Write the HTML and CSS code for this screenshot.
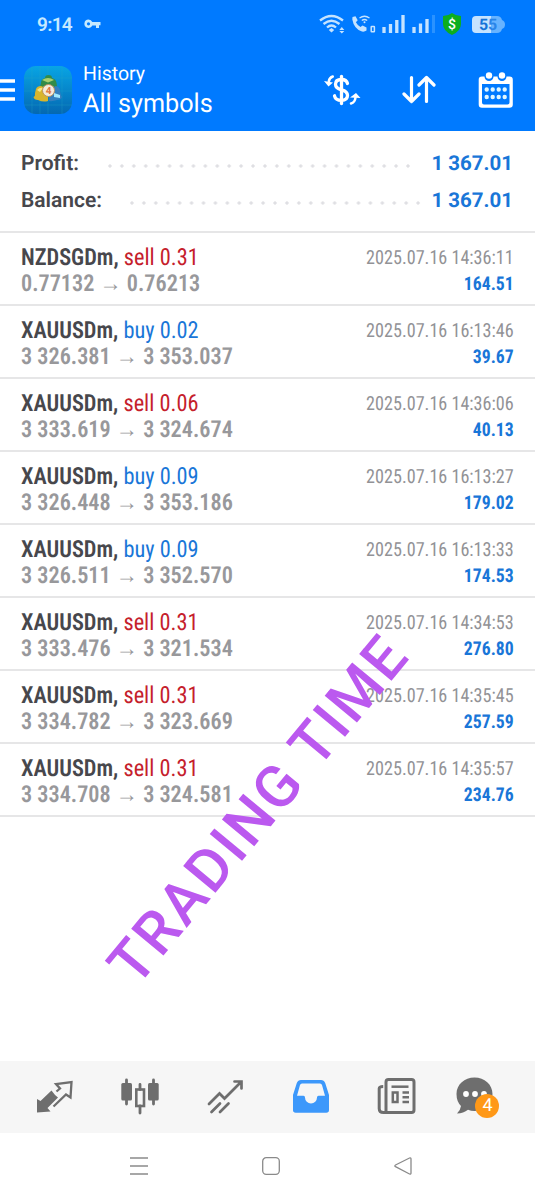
FILE: index.html
```html
<!DOCTYPE html>
<html lang="en">
<head>
    <meta charset="UTF-8">
    <meta name="viewport" content="width=device-width, initial-scale=1.0">
    <title>History</title>
    <link rel="stylesheet" href="styles.css">
</head>
<body>
    <header class="header">
        <div class="status-bar">
            <span class="clock">9:14</span>
            <svg class="key" width="17" height="10" viewBox="0 0 17 10">
                <path d="M4.500 0.500a4.200 4.200 0 1 0 3.900 6H12V9h3V6.300h1.500V3H8.300A4.200 4.200 0 0 0 4.500.5zm0 2.700a1.600 1.600 0 1 1 0 3.200 1.600 1.600 0 0 1 0-3.200z" fill="#c5e9ff" fill-rule="evenodd"/>
            </svg>
            <svg class="signals" width="118" height="20" viewBox="318 14 118 20" fill="none" stroke="#c5e3ff">
                <path d="M320 20.500q11.500-9 23 0M323.500 24q8-6.500 16 0M327 27.500q4.500-4 9 0" stroke-width="2.300"/>
                <path d="M328.800 30l2.700-2 2.700 2-2.700 2.500z" fill="#c5e3ff" stroke="none"/>
                <path d="M339.300 30l2.500-3 2.500 3zM339.300 31h5l-2.500 2.500z" fill="#c5e3ff" stroke="none"/>
                <path d="M352.500 17l3-.8 2.200 4-1.800 2q1.500 3 4.600 4.700l2-1.500 4 2.200v3q-2 1.500-4.500 1Q354 29 352.300 19.500z" fill="#c5e3ff" stroke="none"/>
                <path d="M359.500 18q5-3.500 10 0M361.800 20.500q2.700-2 5.400 0" stroke-width="1.300"/>
                <circle cx="364.500" cy="22.300" r="1" fill="#c5e3ff" stroke="none"/>
                <rect x="371.200" y="26.500" width="3.200" height="5.200" rx=".5" stroke-width="1.500"/>
                <path d="M384 27v6M390.500 24v9M396.800 20v13M403 15v18M414 27v6M420.500 23.500v9.500M427 19v14" stroke-width="3.300"/>
                <path d="M433.500 15v18" stroke="#2a92ff" stroke-width="3"/>
            </svg>
            <svg class="shield" width="20" height="22" viewBox="0 0 20 22">
                <path d="M10 0Q14 3 19 3v8q0 7-9 11Q1 18 1 11V3q5 0 9-3z" fill="#0cae20"/>
                <text x="10" y="15.500" text-anchor="middle" class="shield-text">$</text>
            </svg>
            <svg class="battery" width="33" height="17" viewBox="0 0 33 17">
                <path d="M18 0h7q4 0 5 4 3 1 3 4.500T30 13q-1 4-5 4h-7z" fill="#67b3ff"/>
                <path d="M4 0h15v17H4q-4 0-4-4V4q0-4 4-4z" fill="#c5e3ff"/>
                <text x="7" y="14" class="battery-text">5</text>
                <text x="16" y="14" class="battery-text battery-rest">5</text>
            </svg>
        </div>
        <div class="toolbar">
            <svg class="menu" width="15" height="22" viewBox="0 0 15 22">
                <path d="M0 2h15M0 11h15M0 20h15" stroke="#fff" stroke-width="3.300"/>
            </svg>
            <svg class="logo" width="48" height="48" viewBox="0 0 48 48">
                <defs>
                    <linearGradient id="sky" x1="0" y1="0" x2="0" y2="1">
                        <stop offset="0" stop-color="#08a5e4"/>
                        <stop offset="1" stop-color="#0468b2"/>
                    </linearGradient>
                </defs>
                <rect width="48" height="48" rx="12" fill="url(#sky)"/>
                <path d="M8 0v48M16 0v48M24 0v48M38 0v48M0 12h48M0 25h48M0 39h48" stroke="#29abc9" stroke-width=".7" opacity=".4"/>
                <path d="M17 17q0-4 4-5 0-3 3.500-3t3.500 3q4 1 4.500 5l1 6-9 3-9-3z" fill="#328b48"/>
                <path d="M18 14q6-4 12 0l-6 2.500z" fill="#a8cf70"/>
                <path d="M12 23q1-3 5-3l7 3v12q-5 1.500-10-1-4 0-4.500-3 2-1 1.500-4z" fill="#d8b52c"/>
                <path d="M13 24q3-3 6-2l-3 4z" fill="#f5e685"/>
                <path d="M25 23l7-3q4 1 4 5 .5 4 2 6-1 3-5 3-4 1.500-8 1z" fill="#347fc0"/>
                <path d="M30 27l6 2v3l-6-1z" fill="#a2e7ff"/>
                <circle cx="24.500" cy="24.500" r="6" fill="#f4eadb" stroke="#bb9360"/>
                <text x="24.500" y="28" text-anchor="middle" class="logo-text">4</text>
            </svg>
            <div class="heading">
                <span class="subtitle">History</span>
                <h1>All symbols</h1>
            </div>
            <div class="actions">
                <svg width="38" height="34" viewBox="323 72 38 34" fill="none" stroke="#fff" stroke-width="3.300" stroke-linecap="round">
                    <path d="M341.500 75.500v27"/>
                    <path d="M347.500 82.500q-1-4-6-4-6 0-6 4.800 0 4 6 5.500t6 5.500q0 5-6 5-6 0-7-4.500"/>
                    <path d="M332.800 75.500q-3.500 1-4 5M351 102.500q4-1 4.500-6" stroke-width="2.500"/>
                    <path d="M324 80l9 1.500-4.500 4zM350 96.500l6-4.500 4.500 5z" fill="#fff" stroke="none"/>
                </svg>
                <svg width="35" height="30" viewBox="402 75 35 30" fill="none" stroke="#fff" stroke-width="3.200" stroke-linecap="round" stroke-linejoin="round">
                    <path d="M411.500 77.500v24M404 94l7.500 7.500 7.500-7.500M426.500 101.500v-24M419 85l7.500-7.500 7.500 7.500"/>
                </svg>
                <svg width="36" height="36" viewBox="478 71 36 36">
                    <path d="M482 75.500h2.500a4.500 4.500 0 0 0 9 0h4a4.500 4.500 0 0 0 9 0h3q3.300 0 3.300 3.300v24.700q0 3.300-3.300 3.300H482q-3.300 0-3.300-3.300V78.800q0-3.300 3.300-3.300zM482 83v18.500q0 2 2 2h23.500q2 0 2-2V83z" fill="#fff" fill-rule="evenodd"/>
                    <circle cx="489" cy="74.500" r="3.200" fill="#fff"/>
                    <circle cx="502" cy="74.500" r="3.200" fill="#fff"/>
                    <path d="M486.700 88.500h20M486.700 96h20" stroke="#e0f6ff" stroke-width="4.400" stroke-linecap="round" stroke-dasharray="0 6"/>
                </svg>
            </div>
        </div>
    </header>

    <section class="summary">
        <div class="summary-row">
            <span class="label">Profit:</span>
            <i class="dots dots-profit"></i>
            <b>1 367.01</b>
        </div>
        <div class="summary-row">
            <span class="label">Balance:</span>
            <i class="dots dots-balance"></i>
            <b>1 367.01</b>
        </div>
    </section>

    <main class="deals">
        <div class="deal">
            <div class="deal-info">
                <p class="symbol">NZDSGDm, <span class="sell">sell 0.31</span></p>
                <p class="price">0.77132 <span class="arrow">→</span> 0.76213</p>
            </div>
            <div class="deal-result">
                <p class="date">2025.07.16 14:36:11</p>
                <p class="amount">164.51</p>
            </div>
        </div>
        <div class="deal">
            <div class="deal-info">
                <p class="symbol">XAUUSDm, <span class="buy">buy 0.02</span></p>
                <p class="price">3 326.381 <span class="arrow">→</span> 3 353.037</p>
            </div>
            <div class="deal-result">
                <p class="date">2025.07.16 16:13:46</p>
                <p class="amount">39.67</p>
            </div>
        </div>
        <div class="deal">
            <div class="deal-info">
                <p class="symbol">XAUUSDm, <span class="sell">sell 0.06</span></p>
                <p class="price">3 333.619 <span class="arrow">→</span> 3 324.674</p>
            </div>
            <div class="deal-result">
                <p class="date">2025.07.16 14:36:06</p>
                <p class="amount">40.13</p>
            </div>
        </div>
        <div class="deal">
            <div class="deal-info">
                <p class="symbol">XAUUSDm, <span class="buy">buy 0.09</span></p>
                <p class="price">3 326.448 <span class="arrow">→</span> 3 353.186</p>
            </div>
            <div class="deal-result">
                <p class="date">2025.07.16 16:13:27</p>
                <p class="amount">179.02</p>
            </div>
        </div>
        <div class="deal">
            <div class="deal-info">
                <p class="symbol">XAUUSDm, <span class="buy">buy 0.09</span></p>
                <p class="price">3 326.511 <span class="arrow">→</span> 3 352.570</p>
            </div>
            <div class="deal-result">
                <p class="date">2025.07.16 16:13:33</p>
                <p class="amount">174.53</p>
            </div>
        </div>
        <div class="deal">
            <div class="deal-info">
                <p class="symbol">XAUUSDm, <span class="sell">sell 0.31</span></p>
                <p class="price">3 333.476 <span class="arrow">→</span> 3 321.534</p>
            </div>
            <div class="deal-result">
                <p class="date">2025.07.16 14:34:53</p>
                <p class="amount">276.80</p>
            </div>
        </div>
        <div class="deal">
            <div class="deal-info">
                <p class="symbol">XAUUSDm, <span class="sell">sell 0.31</span></p>
                <p class="price">3 334.782 <span class="arrow">→</span> 3 323.669</p>
            </div>
            <div class="deal-result">
                <p class="date">2025.07.16 14:35:45</p>
                <p class="amount">257.59</p>
            </div>
        </div>
        <div class="deal">
            <div class="deal-info">
                <p class="symbol">XAUUSDm, <span class="sell">sell 0.31</span></p>
                <p class="price">3 334.708 <span class="arrow">→</span> 3 324.581</p>
            </div>
            <div class="deal-result">
                <p class="date">2025.07.16 14:35:57</p>
                <p class="amount">234.76</p>
            </div>
        </div>
    </main>

    <svg class="watermark" width="535" height="400" viewBox="0 600 535 400">
        <text transform="translate(257 810) rotate(-50.3)" x="0" y="21" text-anchor="middle" textLength="429">TRADING TIME</text>
    </svg>

    <nav class="tabs">
        <svg width="40" height="40" viewBox="35 1077 40 40">
            <path d="M37 1099l3.500 2 11-10.500q3 4.500 6.500 7l-10.500 10.500 3 3.500-13.500.9z" fill="#6e6e6e"/>
            <path d="M53.500 1106.500l12.500-12 4.500 3 1-15.500-15.500 2 4 4.500-3.500 3" fill="none" stroke="#6e6e6e" stroke-width="2.300"/>
        </svg>
        <svg width="40" height="40" viewBox="120 1077 40 40">
            <path d="M126.500 1080v24M153.500 1080v24M140 1084.500v5M140 1106v7" stroke="#6e6e6e" stroke-width="2.800" stroke-linecap="round"/>
            <rect x="121.300" y="1083" width="10.700" height="17.500" rx="1.500" fill="#6e6e6e"/>
            <rect x="148" y="1083" width="10.700" height="17.500" rx="1.500" fill="#6e6e6e"/>
            <rect x="136.300" y="1089.500" width="7.700" height="16.500" fill="none" stroke="#6e6e6e" stroke-width="2.600"/>
        </svg>
        <svg width="40" height="40" viewBox="206 1077 40 40" fill="none" stroke="#6e6e6e" stroke-width="2.700" stroke-linecap="round">
            <path d="M209 1104l10.500-10.500 5 5 16.500-16.500M234.500 1081.500h7v7M211.500 1112l8.500-8.500M220 1112l8.500-8.500"/>
        </svg>
        <svg width="40" height="40" viewBox="291 1077 40 40">
            <path d="M301 1080h20q3 0 4.200 3l3.800 12v15q0 2.700-2.700 2.700h-30.600q-2.700 0-2.700-2.700v-15l3.800-12q1.200-3 4.200-3zM302 1083.500q-1.500 0-2 1.500l-3 10.800h6.500q1.500 0 1.500 1.800a6 6 0 0 0 12 0q0-1.800 1.500-1.800h6.500l-3-10.800q-.5-1.500-2-1.500z" fill="#3c98fb" fill-rule="evenodd"/>
        </svg>
        <svg width="40" height="40" viewBox="376 1077 40 40" fill="none" stroke="#6e6e6e" stroke-width="3">
            <path d="M386 1113V1082q0-2.500 2.500-2.500h23q2.500 0 2.500 2.500v28q0 2.500-2.500 2.500h-28q-4.300 0-4.300-4v-20q0-2 4-2"/>
            <path d="M391.500 1086.700h17" stroke-width="2.500"/>
            <rect x="392.800" y="1092.500" width="4.700" height="9.500" stroke-width="2.500"/>
            <path d="M402.500 1092.500h6.500M402.500 1097.300h6.500M402.500 1102h6.500" stroke-width="2.500"/>
        </svg>
        <div class="chat">
            <svg width="44" height="42" viewBox="456 1077 44 42">
                <path d="M474.500 1078.500c10 0 18 7 18 16.500s-8 17-18 17q-3.500 0-6.500-1.200-4.500 3.700-11 3.700 3.500-3.500 4-7.500-4.500-4.500-4.500-12c0-9.500 8-16.500 18-16.500z" fill="#6e6e6e"/>
                <circle cx="466" cy="1095" r="2.900" fill="#fff"/>
                <circle cx="475" cy="1095" r="2.900" fill="#fff"/>
                <circle cx="484" cy="1095" r="2.900" fill="#fff"/>
            </svg>
            <span class="badge">4</span>
        </div>
    </nav>

    <footer class="system-nav">
        <svg width="18" height="20" viewBox="0 0 18 20" stroke="#8a8a8a" stroke-width="1.300">
            <path d="M0 2h18M0 10h18M0 18h18"/>
        </svg>
        <svg width="18" height="20" viewBox="0 0 18 20" fill="none" stroke="#8a8a8a" stroke-width="1.300">
            <rect x=".7" y="1.700" width="16.600" height="16.600" rx="3.500"/>
        </svg>
        <svg width="18" height="20" viewBox="0 0 18 20" fill="none" stroke="#8a8a8a" stroke-width="1.300">
            <path d="M1.500 9l14-7q1.500-.5 1.500 1v14q0 1.500-1.500 1l-14-7.300q-1.300-.8 0-1.700z"/>
        </svg>
    </footer>
</body>
</html>
```
FILE: styles.css
```css
* {
    box-sizing: border-box;
}

body {
    position: relative;
    display: flex;
    flex-direction: column;
    width: 535px;
    height: 1199px;
    margin: 0;
    background: #fff;
    font-family: Roboto, sans-serif;
    text-rendering: geometricPrecision;
    overflow: hidden;
}

p,
h1 {
    margin: 0;
    font-weight: 400;
}

svg {
    display: block;
    flex: none;
}

.header {
    height: 131px;
    background: #007aff;
    color: #fff;
}

.status-bar {
    display: flex;
    align-items: center;
    height: 48px;
    padding-left: 37px;
    color: #c5e9ff;
}

.clock {
    width: 47px;
    font-size: 19px;
    font-weight: 600;
    letter-spacing: -0.7px;
}

.signals {
    margin-left: 217px;
}

.shield {
    margin-left: 6px;
}

.shield-text {
    fill: #fff;
    font-size: 14px;
    font-weight: 500;
}

.battery {
    margin-left: 10px;
}

.battery-text {
    fill: #1573d8;
    font-size: 16px;
    font-weight: 700;
}

.battery-rest {
    fill: #2a85e8;
}

.toolbar {
    display: flex;
    align-items: center;
    height: 83px;
}

.logo {
    margin-left: 9px;
}

.logo-text {
    fill: #e07840;
    font-size: 10px;
    font-weight: 700;
}

.heading {
    width: 240px;
    margin-left: 11px;
    padding-top: 2px;
}

.subtitle {
    display: block;
    font-size: 19.5px;
    line-height: 26px;
}

.heading h1 {
    font-size: 26px;
    line-height: 34px;
    transform: scaleX(0.97);
    transform-origin: left;
}

.actions {
    display: flex;
    align-items: center;
    gap: 41px;
}

.summary {
    height: 102px;
    padding: 14px 22px 0 21px;
    border-bottom: 2px solid #e6e6e7;
}

.summary-row {
    display: flex;
    align-items: center;
    height: 37px;
    color: #47474c;
    font-size: 21px;
    font-weight: 600;
}

.summary-row b {
    margin-left: auto;
    color: #1976d8;
    font-size: 20.5px;
    font-weight: 700;
}

.label {
    width: 87px;
}

.summary-row:last-child .label {
    width: 109px;
}

.dots {
    position: relative;
    top: 2px;
    height: 4px;
    background: radial-gradient(circle, #dfdfe3 1.3px, transparent 2px) 0 0 / 11.93px 4px repeat-x;
}

.dots-profit {
    width: 309px;
    margin-left: -4px;
}

.dots-balance {
    width: 298px;
    margin-left: -4px;
}

.deal {
    display: flex;
    justify-content: space-between;
    height: 73px;
    padding: 11px 21px 0;
    border-bottom: 2px solid #e6e6e7;
    font-stretch: 75%;
}

.deal-info {
    transform: scaleX(0.95);
    transform-origin: left;
}

.symbol {
    color: #47474c;
    font-size: 23.5px;
    font-weight: 600;
    line-height: 26px;
}

.symbol span {
    font-weight: 400;
}

.symbol .sell {
    color: #c5202b;
}

.symbol .buy {
    color: #1976d8;
}

.price {
    color: #98989b;
    font-size: 23.4px;
    font-weight: 600;
    line-height: 26px;
}

.deal-result {
    padding-top: 1px;
    text-align: right;
    transform: scaleX(0.93);
    transform-origin: right;
}

.date {
    color: #929296;
    font-size: 19.5px;
    line-height: 26px;
}

.amount {
    color: #1976d8;
    font-size: 19px;
    font-weight: 700;
    line-height: 25px;
}

.watermark {
    position: absolute;
    top: 600px;
    left: 0;
    fill: #bb59ef;
    font-size: 59px;
    font-weight: 500;
}

.tabs {
    display: flex;
    align-items: center;
    height: 72px;
    margin-top: auto;
    padding-left: 35px;
    gap: 45.3px;
    background: #f6f6f6;
}

.chat {
    position: relative;
    margin-left: -5px;
}

.badge {
    position: absolute;
    top: 18px;
    left: 19px;
    width: 24px;
    height: 24px;
    border-radius: 50%;
    background: #ff9817;
    color: #fff;
    font-size: 18px;
    line-height: 24px;
    text-align: center;
}

.system-nav {
    display: flex;
    align-items: center;
    height: 66px;
    padding-left: 130px;
    gap: 114px;
}
```
